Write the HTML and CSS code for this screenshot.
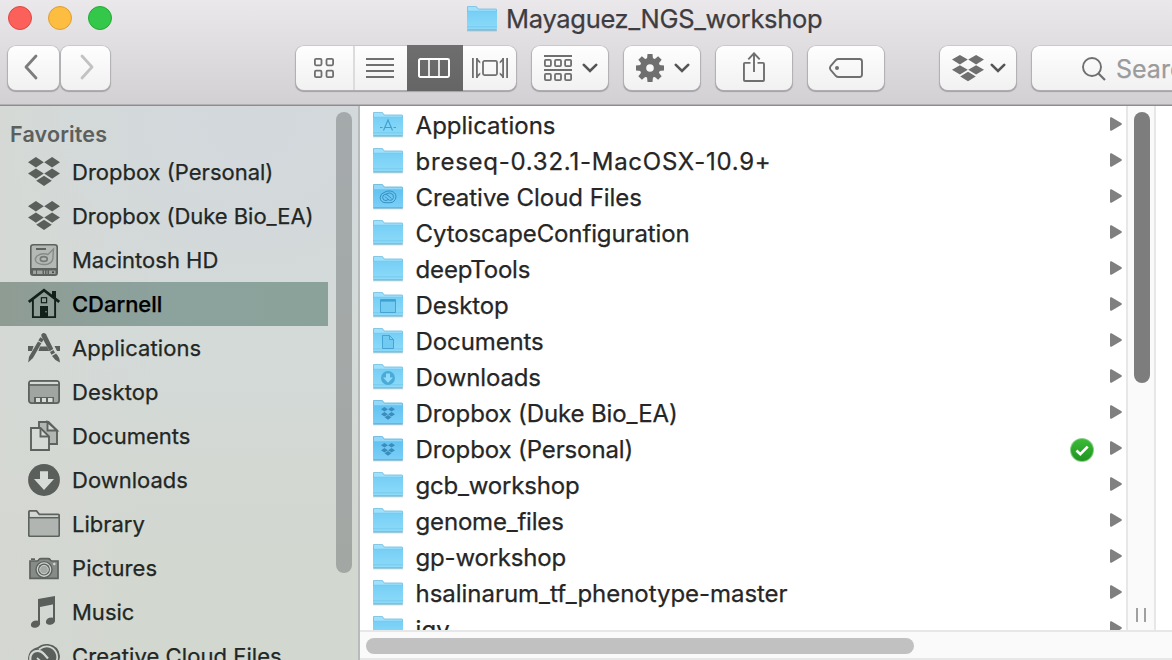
FILE: index.html
```html
<!DOCTYPE html>
<html lang="en">
<head>
<meta charset="utf-8">
<title>Mayaguez_NGS_workshop</title>
<link rel="stylesheet" href="styles.css">
</head>
<body>
<svg class="defs" aria-hidden="true">
  <defs>
    <linearGradient id="fg" x1="0" y1="0" x2="0" y2="1"><stop offset="0" stop-color="#76cff5"/><stop offset="1" stop-color="#8edbf9"/></linearGradient>
    <linearGradient id="fd" x1="0" y1="0" x2="0" y2="1"><stop offset="0" stop-color="#62c2f1"/><stop offset="1" stop-color="#7bd0f7"/></linearGradient>
    <linearGradient id="gg" x1="0" y1="0" x2="0" y2="1"><stop offset="0" stop-color="#3cba37"/><stop offset="1" stop-color="#1f951f"/></linearGradient>
  </defs>
  <symbol id="folder" viewBox="0 0 30 26">
    <path d="M0 24.8H30" stroke="#000" stroke-opacity=".22" stroke-width="1"/>
    <path d="M0 1Q0 0 1 0H8.5Q9.5 0 10.2 1L11.5 2.7H29Q30 2.7 30 3.7V23.3Q30 24.3 29 24.3H1Q0 24.3 0 23.3Z" fill="#9fe0fb"/>
    <path d="M.5 23V1Q.5.4 1 .4H8.5Q9.3.4 10 1.3L11.3 3.1H29Q29.6 3.1 29.6 4V23" fill="none" stroke="#79bfdd" stroke-width=".8"/>
    <path d="M0 5.2H30V23.3Q30 24.2 29 24.2H1Q0 24.2 0 23.3Z" fill="url(#fg)"/>
    <path d="M0 5.2H30M0 20.8H30" stroke="#66bde6" stroke-width=".7" opacity=".7"/>
    <path d="M.5 23.9H29.5" stroke="#5aa9cb" stroke-width=".8"/>
  </symbol>
  <symbol id="folder-dark" viewBox="0 0 30 26">
    <path d="M0 24.8H30" stroke="#000" stroke-opacity=".22" stroke-width="1"/>
    <path d="M0 1Q0 0 1 0H8.5Q9.5 0 10.2 1L11.5 2.7H29Q30 2.7 30 3.7V23.3Q30 24.3 29 24.3H1Q0 24.3 0 23.3Z" fill="#93d8f8"/>
    <path d="M.5 23V1Q.5.4 1 .4H8.5Q9.3.4 10 1.3L11.3 3.1H29Q29.6 3.1 29.6 4V23" fill="none" stroke="#6db4d6" stroke-width=".8"/>
    <path d="M0 5.2H30V23.3Q30 24.2 29 24.2H1Q0 24.2 0 23.3Z" fill="url(#fd)"/>
    <path d="M.5 23.9H29.5" stroke="#4c9dc3" stroke-width=".8"/>
  </symbol>
  <symbol id="dropbox" viewBox="0 0 32 32">
    <path d="M7.9 1 15.8 6.2 7.9 11.5 0 6.2ZM24.1 1 32 6.2 24.1 11.5 16.2 6.2ZM7.9 12.4 15.8 17.5 7.9 22.7 0 17.5ZM24.1 12.4 32 17.5 24.1 22.7 16.2 17.5ZM16 19.7 23.8 24.8 16 30 8.2 24.8Z"/>
  </symbol>
  <symbol id="tri" viewBox="0 0 12 14"><path d="M0 1Q0 0 1.5.2L11.2 6Q12.6 7 11.2 8L1.5 13.8Q0 14 0 13Z" fill="#808080"/></symbol>
  <symbol id="chev" viewBox="0 0 16 10"><path d="M1.8 1.8 8 8 14.2 1.8" fill="none" stroke="#555" stroke-width="2.6" stroke-linecap="round" stroke-linejoin="miter"/></symbol>
</svg>

<div class="window">
  <header class="header">
    <div class="titlebar">
      <div class="lights"><i class="light red"></i><i class="light yellow"></i><i class="light green"></i></div>
      <svg class="folder title-folder"><use href="#folder"/></svg>
      <h1 class="title">Mayaguez_NGS_workshop</h1>
    </div>
    <div class="toolbar">
      <div class="nav">
        <button class="btn back"><svg width="14" height="26" viewBox="0 0 14 26"><path d="M12 2 2 13 12 24" fill="none" stroke="#7c7c7c" stroke-width="2.8" stroke-linecap="round" stroke-linejoin="round"/></svg></button>
        <button class="btn forward"><svg width="14" height="26" viewBox="0 0 14 26"><path d="M2 2 12 13 2 24" fill="none" stroke="#c2c2c2" stroke-width="2.8" stroke-linecap="round" stroke-linejoin="round"/></svg></button>
      </div>
      <div class="segments">
        <button class="seg seg-icons"><svg width="20" height="20" viewBox="0 0 20 20" fill="none" stroke="#6f6f6f" stroke-width="1.8"><rect x=".9" y=".9" width="6.6" height="6.4" rx="1.2"/><rect x="12.5" y=".9" width="6.6" height="6.4" rx="1.2"/><rect x=".9" y="12.7" width="6.6" height="6.4" rx="1.2"/><rect x="12.5" y="12.7" width="6.6" height="6.4" rx="1.2"/></svg></button>
        <button class="seg seg-list"><svg width="28" height="20" viewBox="0 0 28 20"><path d="M0 1H28M0 7H28M0 13H28M0 19H28" stroke="#6f6f6f" stroke-width="2"/></svg></button>
        <button class="seg seg-cols"><svg width="32" height="20" viewBox="0 0 32 20" fill="none" stroke="#fff" stroke-width="2"><rect x="1" y="1" width="30" height="18" rx="1.4"/><path d="M11 1V19M21 1V19" stroke-width="1.6"/></svg></button>
        <button class="seg seg-flow"><svg width="36" height="20" viewBox="0 0 36 20" fill="none" stroke="#6f6f6f" stroke-width="1.8"><path d="M.9 0V20M35.1 0V20M4.9 0V20M31.1 0V20"/><path d="M5 0 8.3 3.4V5.6L5 3ZM5 20 8.3 16.6V14.4L5 17ZM31 0 27.7 3.4V5.6L31 3ZM31 20 27.7 16.6V14.4L31 17Z" fill="#6f6f6f" stroke="none"/><rect x="11" y="2.9" width="14" height="14.2" rx="1.5"/></svg></button>
      </div>
      <button class="btn tool arrange"><svg width="28" height="26" viewBox="0 0 28 26" fill="none" stroke="#6f6f6f" stroke-width="1.8"><path d="M0 1H28M0 15H28"/><rect x=".9" y="4.9" width="6" height="6.2" rx="1"/><rect x="11" y="4.9" width="6" height="6.2" rx="1"/><rect x="21.1" y="4.9" width="6" height="6.2" rx="1"/><rect x=".9" y="18.9" width="6" height="6.2" rx="1"/><rect x="11" y="18.9" width="6" height="6.2" rx="1"/><rect x="21.1" y="18.9" width="6" height="6.2" rx="1"/></svg><svg class="chev"><use href="#chev"/></svg></button>
      <button class="btn tool gear"><svg width="28" height="28" viewBox="-14 -14 28 28"><circle r="7" fill="none" stroke="#6f6f6f" stroke-width="6.4"/><g fill="#6f6f6f"><path id="tooth" d="M-3-9-2.5-14H2.5L3-9ZM-3 9-2.5 14H2.5L3 9Z"/><use href="#tooth" transform="rotate(45)"/><use href="#tooth" transform="rotate(90)"/><use href="#tooth" transform="rotate(135)"/></g></svg><svg class="chev"><use href="#chev"/></svg></button>
      <button class="btn tool share"><svg width="22" height="30" viewBox="0 0 22 30" fill="none" stroke="#6f6f6f" stroke-width="1.9"><path d="M7.5 10.9H2Q.95 10.9.95 12V28Q.95 29 2 29H20Q21 29 21 28V12Q21 10.9 20 10.9H14.5M11 20V1.5M5.3 7.3 11 1.3 16.7 7.3"/></svg></button>
      <button class="btn tool tag"><svg width="34" height="20" viewBox="0 0 34 20"><path d="M9.5 1H30.5Q33 1 33 3.5V16.5Q33 19 30.5 19H9.5Q8 19 7 18L1.6 11.8Q.3 10 1.6 8.2L7 2Q8 1 9.5 1Z" fill="none" stroke="#6f6f6f" stroke-width="1.9"/><circle cx="8" cy="10" r="2" fill="#6f6f6f"/></svg></button>
      <button class="btn tool dbx"><svg width="32" height="29" viewBox="0 0 32 32" preserveAspectRatio="none" fill="#6f6f6f"><use href="#dropbox"/></svg><svg class="chev"><use href="#chev"/></svg></button>
      <div class="search"><svg width="24" height="24" viewBox="0 0 24 24" fill="none" stroke="#6f6f6f"><circle cx="10" cy="10" r="9" stroke-width="1.9"/><path d="M16.5 16.5 23 23" stroke-width="2.2"/></svg><span>Search</span></div>
    </div>
  </header>

  <div class="body">
    <aside class="sidebar">
      <nav class="places">
        <h2 class="heading">Favorites</h2>
        <a class="place"><svg class="ic"><use href="#dropbox"/></svg><span>Dropbox (Personal)</span></a>
        <a class="place"><svg class="ic"><use href="#dropbox"/></svg><span class="ls-snug">Dropbox (Duke Bio_EA)</span></a>
        <a class="place"><svg class="ic" viewBox="0 0 32 32"><rect x="2.8" y=".8" width="26.4" height="30.4" rx="2.5" fill="#b4b9b6" stroke="#5d625f" stroke-width="1.6"/><path d="M8 5H18" stroke="#5d625f" stroke-width="2"/><path d="M25.500 5 20 10.500Q14 8.500 9 12 5.500 16 9.500 19 14 21.500 20 20 25.500 18 25 12Z" fill="none" stroke="#858b88" stroke-width="1.400"/><ellipse cx="15.800" cy="15" rx="3.500" ry="2.400" fill="none" stroke="#747a76" stroke-width="1.600"/><path d="M3 24H29V29Q29 31 27 31H5Q3 31 3 29Z" fill="#5d625f"/><path d="M5 26.500H8V30H5ZM9 26.500H14.500V30H9ZM16 26.500H17V30H16ZM18.500 26.500H19.500V30H18.500ZM21 26.500H27.500V30H21Z" fill="#9fa4a1"/><circle cx="25" cy="28.300" r="1" fill="#3f4441"/></svg><span>Macintosh HD</span></a>
        <a class="place selected"><svg class="ic" viewBox="0 0 32 32"><path d="M24 9V3H28V12Z"/><path d="M.8 14 16 2.200 31.200 14" fill="none" stroke="#13211b" stroke-width="2.800"/><path d="M4.900 12V29.100H27.100V12" fill="none" stroke="#13211b" stroke-width="1.900"/><rect x="13.400" y="9.700" width="5.200" height="5" fill="none" stroke="#13211b" stroke-width="1.200"/><path d="M12 18H20V30H12Z"/><circle cx="18" cy="23.700" r=".8" fill="#8ba29b"/></svg><span class="ls-snug">CDarnell</span></a>
        <a class="place"><svg class="ic" viewBox="0 0 32 32"><path d="M0 14H5.600L4 19H0ZM12 14.500H19L21.200 19H10.400ZM26.500 14H32V19H29Z"/><path d="M13.600 2.200Q15.800-.2 18 2.200L25.300 17 21.500 19.200 13.300 4Z"/><path d="M12.300 5.200 15.700 7.200 13.900 10.400 10.400 8.500ZM10 9.400 13.400 11.300 5 26 .2 30.500 1 24.800Z"/><path d="M22 20 25.500 18 27 20.800 23.500 22.800ZM24 24 28 21.500Q31.800 25 31.900 30.600 26.800 28.500 24 24Z"/></svg><span class="ls-open">Applications</span></a>
        <a class="place"><svg class="ic" viewBox="0 0 32 32"><rect x=".9" y="4.900" width="30.200" height="22.200" rx="2.600" fill="#a0a5a2" stroke="#5d625f" stroke-width="1.800"/><path d="M2 6H30V8H2Z" fill="#d5dad6"/><path d="M1 9H31" stroke="#5d625f" stroke-width="1.600"/><path d="M6 21H26V27H6Z" fill="#5d625f"/><path d="M8 22H12V26H8ZM14 22H18V26H14ZM20 22H24.500V26H20Z" fill="#d8dcd9"/></svg><span class="ls-open">Desktop</span></a>
        <a class="place"><svg class="ic" viewBox="0 0 32 32" stroke="#5d625f" stroke-width="1.900"><path d="M11 2H20.500L29 10.500V24H11Z" fill="#b1b6b3"/><path d="M19.500 2V10.500H29Z" fill="#d5dad6"/><path d="M3 8H12.500L21 16.500V30H3Z" fill="#d5dad6"/><path d="M12.500 8V16.500H21" fill="none"/></svg><span>Documents</span></a>
        <a class="place"><svg class="ic" viewBox="0 0 32 32"><circle cx="16" cy="16" r="15.900"/><path d="M12 7.300H20V15H26L16 26 6 15H12Z" fill="#d6dbd7"/></svg><span>Downloads</span></a>
        <a class="place"><svg class="ic" viewBox="0 0 32 32"><path d="M.9 27.500V3.700Q.9 2.900 1.700 2.900H8.500L11.300 6.300H30.300Q31.100 6.300 31.100 7.100V27.500Q31.100 28.200 30.400 28.200H1.600Q.9 28.200.9 27.500Z" fill="#d3d8d4" stroke="#5d625f" stroke-width="1.800"/><path d="M1.800 10H30.200V27.300H1.800Z" fill="#b0b5b2"/><path d="M1 9.700H31" stroke="#5d625f" stroke-width="1.500"/></svg><span>Library</span></a>
        <a class="place"><svg class="ic" viewBox="0 0 32 32"><path d="M3 6.300H7V8H3Z"/><path d="M2 9H9Q10.500 9 11 7.500 11.700 6.600 13 6.600H20Q21.500 6.600 22 7.500 22.500 9 24 9H30V26.300H2Z" fill="#868b88" stroke="#5d625f" stroke-width="1.700"/><circle cx="16" cy="17.600" r="8" fill="#cfd4d0" stroke="#5d625f" stroke-width="1.400"/><circle cx="16" cy="17.600" r="6"/><circle cx="16" cy="17.600" r="4.300" fill="#a4a9a6" stroke="#cfd4d0" stroke-width="1"/><circle cx="26.300" cy="12" r="1.200" fill="#d5dad6"/></svg><span class="ls-open">Pictures</span></a>
        <a class="place"><svg class="ic" viewBox="0 0 32 32"><path d="M10 3 27 0V8L12 11V27H10Z"/><path d="M25 3H27V25H25Z"/><ellipse cx="7.500" cy="28.200" rx="4.700" ry="3.500" transform="rotate(-18 7.500 28.200)"/><ellipse cx="22.500" cy="25.200" rx="4.700" ry="3.500" transform="rotate(-18 22.500 25.200)"/></svg><span>Music</span></a>
        <a class="place"><svg class="ic" viewBox="0 0 32 32"><path d="M10 7Q14 3.500 20 4 31 5.500 32 16 31 28 20 29H10Q1 28 0 18 1 9 10 7Z"/><path d="M3.500 24Q0 15 6.500 11.500 12 9.500 16 14L20 18.500" fill="none" stroke="#d3d8d3" stroke-width="2.200"/><path d="M11 9.500Q18 4 25 8.500 31 14 28.500 21 24 28 17 25L9 18" fill="none" stroke="#d3d8d3" stroke-width="1.700"/></svg><span class="ls-open">Creative Cloud Files</span></a>
      </nav>
      <div class="side-scroll"></div>
    </aside>

    <main class="browser">
      <div class="columns">
        <ul class="files">
          <li class="row"><svg class="folder" viewBox="0 0 30 26"><use href="#folder"/><path d="M10.500 18.500 15 8 19.500 18.500M7 15.500H9.500M11.500 15.500H18M20.500 15.500H23" fill="none" stroke="#3f9fce" stroke-width="1.100"/></svg><span>Applications</span><svg class="tri"><use href="#tri"/></svg></li>
          <li class="row"><svg class="folder"><use href="#folder"/></svg><span class="ls-wide">breseq-0.32.1-MacOSX-10.9+</span><svg class="tri"><use href="#tri"/></svg></li>
          <li class="row"><svg class="folder" viewBox="0 0 30 26"><use href="#folder-dark"/><g fill="none" stroke="#378fc0" stroke-width="1"><path d="M11 8.500Q14 6.500 17.500 7 23 8 23 13 22 18.500 17 18.700H12Q7.200 18 7.200 13.500 7.500 9.500 11 8.500Z"/><path d="M15.500 15.500Q13 17.500 10.500 15.800 8.500 13 10.800 10.800 13 9.500 15 11.500L18.500 14.500"/><path d="M13 10Q17 7.500 20 10.500 21.500 14 19 16 16 17.300 14 14.500L12 12.500"/></g></svg><span class="ls-snug">Creative Cloud Files</span><svg class="tri"><use href="#tri"/></svg></li>
          <li class="row"><svg class="folder"><use href="#folder"/></svg><span class="ls-tight">CytoscapeConfiguration</span><svg class="tri"><use href="#tri"/></svg></li>
          <li class="row"><svg class="folder"><use href="#folder"/></svg><span class="ls-tighter">deepTools</span><svg class="tri"><use href="#tri"/></svg></li>
          <li class="row"><svg class="folder" viewBox="0 0 30 26"><use href="#folder"/><path d="M7.500 7.500H22.500V20.500H7.500Z" fill="#74ccf3" stroke="#3f9fce" stroke-width=".9"/><path d="M7.500 8.700H22.500" stroke="#3f9fce" stroke-width="1.800"/></svg><span class="ls-tight">Desktop</span><svg class="tri"><use href="#tri"/></svg></li>
          <li class="row"><svg class="folder" viewBox="0 0 30 26"><use href="#folder"/><path d="M9.500 7.500H16.500L20.500 11.500V20.500H9.500ZM16.500 7.500V11.500H20.500" fill="#70caf1" stroke="#3f9fce" stroke-width=".9"/></svg><span class="ls-tight">Documents</span><svg class="tri"><use href="#tri"/></svg></li>
          <li class="row"><svg class="folder" viewBox="0 0 30 26"><use href="#folder"/><circle cx="15" cy="14" r="7" fill="#4aabd8"/><path d="M13 9.500H17V13.500H20L15 18.700 10 13.500H13Z" fill="#8fdbf9"/></svg><span class="ls-tight">Downloads</span><svg class="tri"><use href="#tri"/></svg></li>
          <li class="row"><svg class="folder" viewBox="0 0 30 26"><use href="#folder-dark"/><use href="#dropbox" x="8" y="6.500" width="14" height="14" fill="#3b8cbc"/></svg><span class="ls-tight">Dropbox (Duke Bio_EA)</span><svg class="tri"><use href="#tri"/></svg></li>
          <li class="row"><svg class="folder" viewBox="0 0 30 26"><use href="#folder-dark"/><use href="#dropbox" x="8" y="6.500" width="14" height="14" fill="#3b8cbc"/></svg><span class="ls-tight">Dropbox (Personal)</span><svg class="badge" viewBox="0 0 24 24"><circle cx="12" cy="12" r="12" fill="#8bd088"/><circle cx="12" cy="12" r="11" fill="url(#gg)"/><path d="M6.500 12.500 10.300 16.200 17.700 8.600" fill="none" stroke="#fff" stroke-width="2.700"/></svg><svg class="tri"><use href="#tri"/></svg></li>
          <li class="row"><svg class="folder"><use href="#folder"/></svg><span class="ls-tighter">gcb_workshop</span><svg class="tri"><use href="#tri"/></svg></li>
          <li class="row"><svg class="folder"><use href="#folder"/></svg><span class="ls-tighter">genome_files</span><svg class="tri"><use href="#tri"/></svg></li>
          <li class="row"><svg class="folder"><use href="#folder"/></svg><span class="ls-tighter">gp-workshop</span><svg class="tri"><use href="#tri"/></svg></li>
          <li class="row"><svg class="folder"><use href="#folder"/></svg><span class="ls-snug">hsalinarum_tf_phenotype-master</span><svg class="tri"><use href="#tri"/></svg></li>
          <li class="row"><svg class="folder"><use href="#folder"/></svg><span>igv</span><svg class="tri"><use href="#tri"/></svg></li>
        </ul>
        <div class="vtrack"><div class="vthumb"></div><div class="grip"></div></div>
        <div class="next"></div>
      </div>
      <div class="htrack"><div class="hthumb"></div></div>
    </main>
  </div>
</div>
</body>
</html>
```
FILE: styles.css
```css
* { box-sizing: border-box; }
body { margin: 0; font-family: Inter, "Liberation Sans", sans-serif; overflow: hidden; -webkit-text-stroke: .25px currentColor; }
.defs { position: absolute; width: 0; height: 0; }
.window { width: 1172px; height: 660px; display: flex; flex-direction: column; overflow: hidden; }
button { font: inherit; padding: 0; margin: 0; border: 0; }

/* Title bar and toolbar */
.header { height: 106px; flex: none; background: linear-gradient(#eae8eb, #d2d0d3); border-bottom: 1px solid #8e8c8f; box-shadow: inset 0 -1px #b2b0b3; }
.titlebar { height: 46px; display: flex; align-items: flex-start; padding: 6px 0 0 8px; }
.lights { display: flex; gap: 16px; width: 459px; }
.light { width: 24px; height: 24px; border-radius: 50%; }
.red { background: #fc605b; border: 1px solid #de4643; }
.yellow { background: #fdbd40; border: 1px solid #dd9f34; }
.green { background: #34c84a; border: 1px solid #24a833; }
.folder { width: 30px; height: 26px; flex: none; }
.title { margin: 0 0 0 9px; font-size: 25.500px; line-height: 26px; font-weight: 400; color: #3e3c40; white-space: nowrap; letter-spacing: -.3px; }
.toolbar { display: flex; padding-left: 8px; width: 1240px; }
.nav { display: flex; gap: 2px; margin-right: 186px; }
.btn, .segments, .search { height: 44px; border-radius: 8px; background: linear-gradient(#fefefe, #f1f1f1); box-shadow: 0 0 0 .6px #bcbabd, 0 1px 1px .4px #a3a1a4; flex: none; }
.btn { display: flex; align-items: center; justify-content: center; }
.back { width: 51px; padding-right: 6px; }
.forward { width: 49px; padding-left: 2px; }
.back, .forward { padding-bottom: 2px; }
.segments { display: flex; width: 220px; margin-right: 16px; }
.seg { background: none; display: flex; align-items: center; justify-content: center; }
.seg-icons { width: 59px; border-right: 2px solid #dcdcdc; padding-right: 1px; }
.seg-list { width: 52px; padding-right: 2px; }
.seg-cols { width: 56px; height: 46px; margin-top: -1px; padding-right: 2px; background: linear-gradient(#6e6e6e, #656565); }
.seg-flow { width: 53px; }
.tool { width: 76px; margin-right: 16px; }
.chev { width: 16px; height: 10px; flex: none; }
.arrange, .gear { gap: 10px; padding-left: 2px; }
.dbx { gap: 6px; padding-left: 2px; margin-left: 40px; }
.tag { padding-left: 0; }
.search { display: flex; width: 200px; padding-left: 50px; align-items: center; gap: 10px; font-size: 25px; color: #9b9b9b; }
.search svg { margin-top: 2px; }
.search span { padding-top: 1px; }
.share { padding-bottom: 2px; }

/* Sidebar */
.body { display: flex; flex: 1; min-height: 0; }
.sidebar { width: 360px; flex: none; display: flex; justify-content: space-between; border-right: 2px solid #b7bbbb; padding-right: 6px; overflow: hidden; background: radial-gradient(ellipse 260px 200px at 250px 20px, #d3d8dd, transparent), linear-gradient(90deg, #d6d8d3a0, transparent 45%), linear-gradient(#d3dad9 0%, #d3dad8 45%, #d3d7d1 75%, #d2d7d0 100%); }
.places { width: 328px; }
.heading { margin: 0; height: 44px; padding: 6px 0 0 10px; font-size: 21.500px; line-height: 44px; font-weight: 600; letter-spacing: .15px; color: #5b605d; -webkit-text-stroke-width: 0; }
.place { display: flex; align-items: center; gap: 12px; height: 44px; padding-left: 28px; font-size: 22px; color: #222725; white-space: nowrap; }
.ic { width: 32px; height: 32px; flex: none; fill: #5a5f5c; }
.selected { background: linear-gradient(90deg, #8f9c94, #8ca29d 50%, #8ba29b); color: #000; font-weight: 500; }
.selected .ic { fill: #13211b; }
.side-scroll { width: 16px; height: 461px; margin-top: 6px; border-radius: 8px; background: linear-gradient(#a4a9ab, #a3a7a4); }

/* Tracking */
.ls-wide { letter-spacing: .75px; }
.ls-open { letter-spacing: .08px; }
.ls-snug { letter-spacing: -.04px; }
.ls-tight { letter-spacing: -.12px; }
.ls-tighter { letter-spacing: -.2px; }

/* Column browser */
.browser { flex: 1; min-width: 0; display: flex; flex-direction: column; background: #fff; }
.columns { display: flex; height: 524px; overflow: hidden; }
.files { list-style: none; margin: 0; padding: 1px 4px 0 13px; width: 766px; }
.row { display: flex; align-items: center; height: 36px; font-size: 24px; color: #262626; white-space: nowrap; }
.row span { margin-left: 12.600px; padding-top: 1px; }
.tri { width: 12px; height: 14px; margin-left: auto; margin-top: -2px; flex: none; }
.badge { width: 24px; height: 24px; margin-left: auto; margin-top: 1px; }
.badge + .tri { margin-left: 16px; }
.vtrack { width: 30px; display: flex; flex-direction: column; justify-content: space-between; align-items: center; padding: 6px 0 8px; background: #fafafa; border: solid #e7e7e7; border-width: 0 2px; }
.vthumb { width: 16px; height: 271px; margin-left: 2px; border-radius: 8px; background: #7d7d7d; }
.grip { width: 10px; height: 14px; border: solid #a0a0a0; border-width: 0 2px; }
.next { flex: 1; }
.htrack { height: 30px; padding: 6px; background: #fafafa; border: solid #e7e7e7; border-width: 2px 0; }
.hthumb { width: 548px; height: 16px; border-radius: 8px; background: #c1c1c1; }
```
